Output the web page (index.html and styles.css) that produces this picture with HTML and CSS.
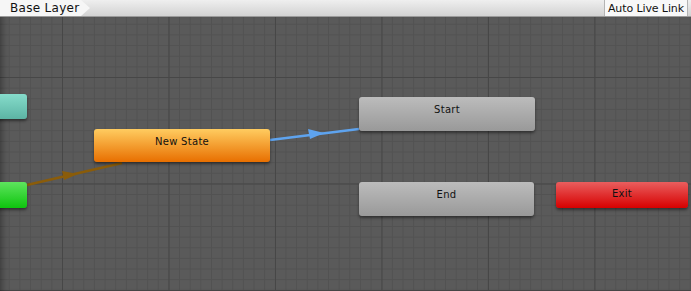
FILE: index.html
```html
<!DOCTYPE html>
<html>
<head>
    <title>Animator - Base Layer</title>
    <link rel="stylesheet" href="styles.css">
</head>
<body>
    <div class="window">
        <div class="toolbar">
            <div class="crumb">Base Layer</div>
            <div class="spacer"></div>
            <button class="live-link">Auto Live Link</button>
        </div>

        <div class="graph">
            <!-- transitions -->
            <svg class="links" width="691" height="274" viewBox="0 17 691 274">
                <line x1="27" y1="185" x2="122" y2="163" stroke="#8a5c0a" stroke-width="2.5"/>
                <polygon points="62,171 78,174 64,180" fill="#8a5c0a"/>
                <line x1="270" y1="140" x2="359" y2="129" stroke="#5ea3ee" stroke-width="2.5"/>
                <polygon points="308,129 324,133 310,139" fill="#5ea3ee"/>
            </svg>

            <!-- states -->
            <div class="state any" style="left:-10px; top:77px; width:37px; height:25px;"></div>
            <div class="state entry" style="left:-10px; top:165px; width:37px; height:26px;"></div>
            <div class="state default" style="left:94px; top:112px; width:176px; height:33px;">New State</div>
            <div class="state grey" style="left:359px; top:80px; width:176px; height:34px;">Start</div>
            <div class="state grey" style="left:359px; top:165px; width:175px; height:34px;">End</div>
            <div class="state exit" style="left:556px; top:165px; width:132px; height:26px;">Exit</div>
        </div>
    </div>
</body>
</html>
```

FILE: styles.css
```css
body {
    margin: 0;
    font-family: "DejaVu Sans", Verdana, sans-serif;
    background-color: #595959;
    overflow: hidden;
}
.window {
    width: 691px;
    height: 291px;
    display: flex;
    flex-direction: column;
}
.toolbar {
    height: 17px;
    display: flex;
    align-items: stretch;
    background: linear-gradient(#efefef, #d2d2d2);
    border-bottom: 1px solid #9a9a9a;
    box-sizing: border-box;
}
.crumb {
    position: relative;
    padding: 0 0 0 10px;
    width: 71px;
    font-size: 12px;
    line-height: 16px;
    letter-spacing: 0.3px;
    color: #111;
    background: #f6f6f6;
}
.crumb::after {
    content: "";
    position: absolute;
    right: -9px;
    top: 0;
    border-top: 8px solid transparent;
    border-bottom: 8px solid transparent;
    border-left: 9px solid #f6f6f6;
}
.spacer {
    flex: 1;
}
.live-link {
    margin: 0 3px 0 0;
    padding: 0 3px;
    font-family: inherit;
    font-size: 11px;
    letter-spacing: -0.1px;
    color: #111;
    background: #f8f8f8;
    border: none;
    border-left: 1px solid #b4b4b4;
    border-right: 1px solid #b4b4b4;
}
.graph {
    position: relative;
    flex: 1;
    overflow: hidden;
    background-color: #5a5a5a;
    background-image:
        linear-gradient(90deg, #474747 1px, transparent 1px),
        linear-gradient(#474747 1px, transparent 1px),
        linear-gradient(90deg, #525252 1px, transparent 1px),
        linear-gradient(#525252 1px, transparent 1px);
    background-size: 106.5px 106.5px, 106.5px 106.5px, 10.65px 10.65px, 10.65px 10.65px;
    background-position: 62px 60px, 62px 60px, 62px 60px, 62px 60px;
    box-shadow: inset 6px 0 6px -4px rgba(0, 0, 0, 0.35);
}
.links {
    position: absolute;
    left: 0;
    top: 0;
}
.state {
    position: absolute;
    box-sizing: border-box;
    border-radius: 3px;
    font-size: 10px;
    letter-spacing: 0.3px;
    color: #111;
    text-align: center;
    padding-top: 7px;
    box-shadow: 0 2px 3px rgba(0, 0, 0, 0.45);
}
.any {
    background: linear-gradient(#86dccb, #5cb4a4);
}
.entry {
    background: linear-gradient(#5ee45e, #0ec50e);
}
.default {
    background: linear-gradient(#ffcc60, #e86f00);
}
.grey {
    background: linear-gradient(#bcbcbc, #999999);
}
.exit {
    background: linear-gradient(#ea5e5e, #d60000);
    padding-top: 6px;
}
```
